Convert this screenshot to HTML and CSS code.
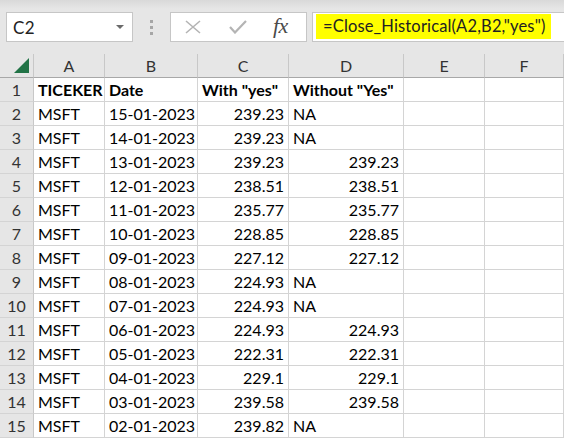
FILE: index.html
```html
<!DOCTYPE html>
<html>
<head>
<meta charset="utf-8">
<link rel="stylesheet" href="styles.css">
</head>
<body>
<div class="topbar">
  <div class="namebox">
    <span class="ref">C2</span>
    <svg class="dd" width="8" height="5" viewBox="0 0 8 5"><path d="M0 0H8L4 4Z" fill="#6a6a6a"/></svg>
  </div>
  <div class="grip"><i></i><i></i><i></i></div>
  <div class="fxbox">
    <svg class="ico" width="16" height="14" viewBox="0 0 16 14"><path d="M1 1L15 13M15 1L1 13" stroke="#b4b4b4" stroke-width="1.6" fill="none"/></svg>
    <svg class="ico chk" width="18" height="14" viewBox="0 0 18 14"><path d="M1 7L6 12.5L17 1" stroke="#b4b4b4" stroke-width="2.2" fill="none"/></svg>
    <span class="fx">fx</span>
  </div>
  <div class="formula"><span class="hl">=Close_Historical(A2,B2,"yes")</span></div>
</div>
<div class="sheet">
  <div class="corner"><svg width="16" height="16" viewBox="0 0 16 16"><path d="M15 0V15H0Z" fill="#217346"/></svg></div>
  <div class="ch">A</div><div class="ch">B</div><div class="ch">C</div><div class="ch">D</div><div class="ch">E</div><div class="ch">F</div>

  <div class="rh">1</div><div class="c b">TICEKER</div><div class="c b">Date</div><div class="c b">With "yes"</div><div class="c b">Without "Yes"</div><div class="c"></div><div class="c"></div>
  <div class="rh">2</div><div class="c">MSFT</div><div class="c r">15-01-2023</div><div class="c r">239.23</div><div class="c">NA</div><div class="c"></div><div class="c"></div>
  <div class="rh">3</div><div class="c">MSFT</div><div class="c r">14-01-2023</div><div class="c r">239.23</div><div class="c">NA</div><div class="c"></div><div class="c"></div>
  <div class="rh">4</div><div class="c">MSFT</div><div class="c r">13-01-2023</div><div class="c r">239.23</div><div class="c r">239.23</div><div class="c"></div><div class="c"></div>
  <div class="rh">5</div><div class="c">MSFT</div><div class="c r">12-01-2023</div><div class="c r">238.51</div><div class="c r">238.51</div><div class="c"></div><div class="c"></div>
  <div class="rh">6</div><div class="c">MSFT</div><div class="c r">11-01-2023</div><div class="c r">235.77</div><div class="c r">235.77</div><div class="c"></div><div class="c"></div>
  <div class="rh">7</div><div class="c">MSFT</div><div class="c r">10-01-2023</div><div class="c r">228.85</div><div class="c r">228.85</div><div class="c"></div><div class="c"></div>
  <div class="rh">8</div><div class="c">MSFT</div><div class="c r">09-01-2023</div><div class="c r">227.12</div><div class="c r">227.12</div><div class="c"></div><div class="c"></div>
  <div class="rh">9</div><div class="c">MSFT</div><div class="c r">08-01-2023</div><div class="c r">224.93</div><div class="c">NA</div><div class="c"></div><div class="c"></div>
  <div class="rh">10</div><div class="c">MSFT</div><div class="c r">07-01-2023</div><div class="c r">224.93</div><div class="c">NA</div><div class="c"></div><div class="c"></div>
  <div class="rh">11</div><div class="c">MSFT</div><div class="c r">06-01-2023</div><div class="c r">224.93</div><div class="c r">224.93</div><div class="c"></div><div class="c"></div>
  <div class="rh">12</div><div class="c">MSFT</div><div class="c r">05-01-2023</div><div class="c r">222.31</div><div class="c r">222.31</div><div class="c"></div><div class="c"></div>
  <div class="rh">13</div><div class="c">MSFT</div><div class="c r">04-01-2023</div><div class="c r">229.1</div><div class="c r">229.1</div><div class="c"></div><div class="c"></div>
  <div class="rh">14</div><div class="c">MSFT</div><div class="c r">03-01-2023</div><div class="c r">239.58</div><div class="c r">239.58</div><div class="c"></div><div class="c"></div>
  <div class="rh">15</div><div class="c">MSFT</div><div class="c r">02-01-2023</div><div class="c r">239.82</div><div class="c">NA</div><div class="c"></div><div class="c"></div>
</div>
</body>
</html>
```
FILE: styles.css
```css
html, body {
  margin: 0;
  padding: 0;
  background: #ffffff;
  font-family: Lato, "Open Sans", sans-serif;
  color: #000;
  overflow: hidden;
}
.topbar {
  height: 54px;
  box-sizing: border-box;
  padding-top: 12px;
  display: flex;
  align-items: flex-start;
  background: linear-gradient(#d9d9d9 0px, #e6e6e6 9px, #e6e6e6 100%);
}
.namebox {
  margin-left: 6px;
  width: 127px;
  height: 30px;
  box-sizing: border-box;
  background: #fff;
  border: 1px solid #c6c6c6;
  display: flex;
  align-items: center;
  justify-content: space-between;
  padding: 0 8px 0 6px;
}
.ref {
  font-size: 17px;
  color: #222;
  letter-spacing: 0.3px;
}
.dd { margin-top: 1px; }
.grip {
  width: 37px;
  display: flex;
  flex-direction: column;
  align-items: center;
  gap: 3px;
  padding-top: 8px;
}
.grip i {
  display: block;
  width: 3px;
  height: 3px;
  background: #a6a6a6;
}
.fxbox {
  width: 137px;
  height: 30px;
  box-sizing: border-box;
  background: #fff;
  border: 1px solid #c6c6c6;
  display: flex;
  align-items: center;
  padding-left: 14px;
}
.ico { flex: none; }
.chk { margin-left: 28px; }
.fx {
  margin-left: 26px;
  font-family: "Liberation Serif", serif;
  font-style: italic;
  font-size: 22px;
  color: #4a4a4a;
  letter-spacing: -0.5px;
  margin-top: -2px;
}
.formula {
  flex: 1;
  margin-left: 5px;
  height: 30px;
  box-sizing: border-box;
  background: #fff;
  border: 1px solid #c6c6c6;
  border-right: none;
  padding: 1px 0 0 3px;
}
.hl {
  display: inline-block;
  background: #ffff00;
  height: 25px;
  line-height: 25px;
  width: 235px;
  box-sizing: border-box;
  padding-left: 7px;
  font-size: 16.5px;
  letter-spacing: 0.15px;
  color: #222;
  white-space: nowrap;
}
.sheet {
  display: grid;
  grid-template-columns: 34px 71px 93px 91px 115px 81px 1fr;
  grid-auto-rows: 24px;
  background: #fff;
}
.corner, .ch, .rh {
  background: #e6e6e6;
  box-sizing: border-box;
  color: #333;
  font-size: 16px;
}
.corner {
  border-right: 1px solid #c8c8c8;
  border-bottom: 1px solid #a8a8a8;
  display: flex;
  align-items: flex-end;
  justify-content: flex-end;
  padding: 0 3px 3px 0;
}
.ch {
  border-right: 1px solid #c8c8c8;
  border-bottom: 1px solid #a8a8a8;
  text-align: center;
  line-height: 23px;
}
.rh {
  border-right: 1px solid #c8c8c8;
  border-bottom: 1px solid #d4d4d4;
  text-align: center;
  line-height: 23px;
}
.c {
  box-sizing: border-box;
  border-right: 1px solid #d4d4d4;
  border-bottom: 1px solid #d4d4d4;
  font-size: 16px;
  line-height: 23px;
  padding: 0 4px;
  white-space: nowrap;
  overflow: hidden;
}
.c.r { text-align: right; }
.c.b { font-weight: bold; }
```
